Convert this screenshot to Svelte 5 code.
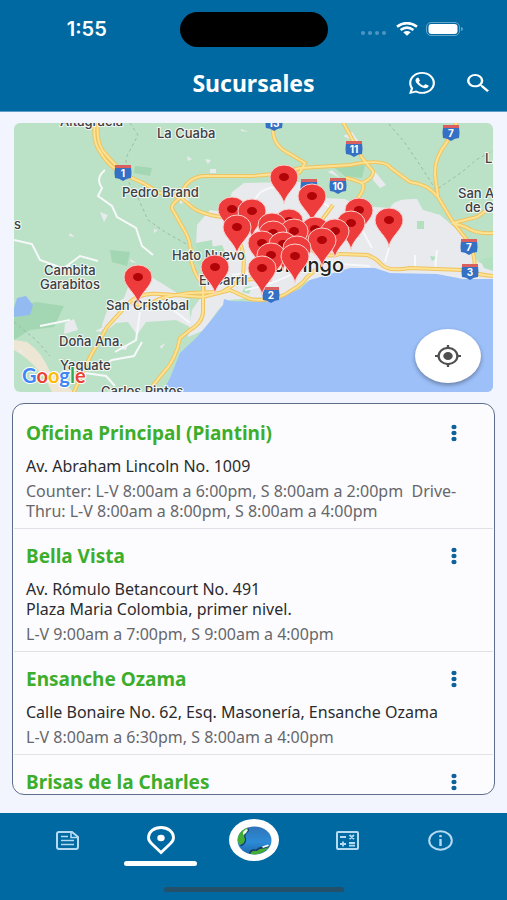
<script lang="ts">
  interface Branch {
    name: string;
    address: string[];
    hours: string;
  }

  interface Label {
    x: number;
    y: number;
    text: string;
  }

  const branches: Branch[] = [
    {
      name: "Oficina Principal (Piantini)",
      address: ["Av. Abraham Lincoln No. 1009"],
      hours: "Counter: L-V 8:00am a 6:00pm, S 8:00am a 2:00pm  Drive-Thru: L-V 8:00am a 8:00pm, S 8:00am a 4:00pm",
    },
    {
      name: "Bella Vista",
      address: ["Av. Rómulo Betancourt No. 491", "Plaza Maria Colombia, primer nivel."],
      hours: "L-V 9:00am a 7:00pm, S 9:00am a 4:00pm",
    },
    {
      name: "Ensanche Ozama",
      address: ["Calle Bonaire No. 62, Esq. Masonería, Ensanche Ozama"],
      hours: "L-V 8:00am a 6:30pm, S 8:00am a 4:00pm",
    },
    {
      name: "Brisas de la Charles",
      address: [],
      hours: "",
    },
  ];

  // map units, north to south so the lower pins overlap the upper ones
  const pins = [
    [284, 177], [312, 196], [232, 209], [359, 210], [252, 211], [389, 220],
    [289, 221], [351, 223], [272, 225], [237, 227], [315, 229], [294, 231],
    [335, 231], [273, 233], [262, 243], [283, 244], [322, 240], [297, 248],
    [271, 255], [295, 256], [215, 267], [262, 268], [138, 277],
  ];

  const labels: Label[] = [
    { x: 60, y: 126, text: "Altagracia" },
    { x: 157, y: 138, text: "La Cuaba" },
    { x: 122, y: 197, text: "Pedro Brand" },
    { x: 14, y: 229, text: "s" },
    { x: 172, y: 260, text: "Hato Nuevo" },
    { x: 199, y: 285, text: "El Carril" },
    { x: 44, y: 275, text: "Cambita" },
    { x: 40, y: 289, text: "Garabitos" },
    { x: 106, y: 310, text: "San Cristóbal" },
    { x: 59, y: 346, text: "Doña Ana." },
    { x: 60, y: 370, text: "Yaguate" },
    { x: 101, y: 396, text: "Carlos Pintos" },
    { x: 485, y: 163, text: "L" },
    { x: 458, y: 198, text: "San A" },
    { x: 465, y: 212, text: "de G" },
  ];

  const shields = [
    { x: 123, y: 173, n: "1" },
    { x: 274, y: 123, n: "13" },
    { x: 354, y: 149, n: "11" },
    { x: 451, y: 133, n: "7" },
    { x: 309, y: 187, n: "" },
    { x: 338, y: 186, n: "10" },
    { x: 469, y: 247, n: "7" },
    { x: 470, y: 272, n: "3" },
    { x: 271, y: 295, n: "2" },
  ];

  const roads = [
    "M95 122Q92 142 101 153Q108 166 123 174L143 183L160 193L180 197L192 207Q200 214 222 217",
    "M98 122Q96 141 103 151Q112 162 120 169",
    "M180 198Q185 178 203 176L237 176Q270 177 300 168L350 165Q384 158 391 168L410 182Q428 184 438 197",
    "M273 130Q273 146 290 154L305 163L300 172L290 178",
    "M343 122L350 135L362 158L373 171Q374 178 362 183Q350 178 345 178M362 183Q366 188 358 198L350 207",
    "M457 122L447 142Q434 158 435 175L438 197L453 222L467 240Q477 255 474 274",
    "M452 223Q465 226 471 230Q480 234 494 233M453 223L477 217L494 205",
    "M180 198Q168 206 174 212L183 228Q191 240 191 255Q191 270 203 285L203 310Q204 322 190 330L180 338Q176 360 163 373L146 394",
    "M73 394L90 357L107 327L127 305Q138 292 160 294L203 297L230 290L250 299Q275 303 292 290Q303 284 307 277L318 268",
    "M132 303Q148 308 155 301Q164 296 190 293L215 292",
    "M300 243Q325 260 340 254L367 255Q376 258 381 264Q388 272 410 268L463 270Q478 275 494 276",
    "M238 240Q246 252 243 274Q240 282 222 292M243 280Q260 280 282 266M333 205L318 225",
  ];

  const streets = [
    "M105 170Q95 178 102 188L98 196L112 206L117 217L136 228L142 246L153 255",
    "M14 240L32 244L40 260L62 268L70 265",
    "M60 271L80 256L98 261M40 326L70 320",
    "M140 312L136 340L115 352M98 368L112 360L134 356L142 342",
    "M85 373L106 376L115 386M172 309L190 323",
    "M255 203Q256 190 275 187L293 190M300 199Q320 196 332 210",
    "M232 275Q265 270 295 262M245 290Q275 284 298 271",
    "M360 226L372 248M389 248L385 262M325 263L370 266M415 255L415 270M437 250L435 269",
  ];

  const tabs = [
    { id: "noticias", name: "Noticias" },
    { id: "sucursales", name: "Sucursales" },
    { id: "inicio", name: "Inicio" },
    { id: "calculadora", name: "Calculadora" },
    { id: "info", name: "Información" },
  ];

  let active = $state("sucursales");
</script>

<div class="app">
  <header>
    <div class="status">
      <span class="time">1:55</span>
      <span class="island"></span>
      <div class="signals">
        <svg width="28" height="6" viewBox="0 0 28 6" fill="#4c97c2">
          <circle cx="3" cy="3" r="2" /><circle cx="10" cy="3" r="2" />
          <circle cx="17" cy="3" r="2" /><circle cx="24" cy="3" r="2" />
        </svg>
        <svg width="22" height="14" viewBox="0 0 22 14" fill="none" stroke="#fff" stroke-width="2.6">
          <path d="M1 4.6Q11 -2.4 21 4.6" />
          <path d="M4.6 8Q11 3.400 17.400 8" />
          <path d="M7.300 10.200Q11 7.600 14.700 10.200L11 13.800z" fill="#fff" stroke="none" />
        </svg>
        <svg width="37" height="14" viewBox="0 0 37 14">
          <rect x=".5" y=".5" width="33" height="13" rx="4.500" fill="none" stroke="#66a5ca" />
          <rect x="2.500" y="2" width="29" height="10" rx="3" fill="#fff" />
          <path d="M35 5v4q2-.5 2-2t-2-2" fill="#66a5ca" />
        </svg>
      </div>
    </div>
    <div class="bar">
      <h1>Sucursales</h1>
      <div class="actions">
        <button aria-label="WhatsApp">
          <svg width="26" height="22" viewBox="2 2 20 20" preserveAspectRatio="none" fill="#fff">
            <path d="M12.040 2C6.580 2 2.130 6.450 2.130 11.910C2.130 13.660 2.590 15.360 3.450 16.860L2.050 22L7.300 20.620C8.750 21.410 10.380 21.830 12.040 21.830C17.500 21.830 21.950 17.380 21.950 11.920C21.950 9.270 20.920 6.780 19.050 4.910C17.180 3.030 14.690 2 12.040 2M12.050 3.670C14.250 3.670 16.310 4.530 17.870 6.090C19.420 7.650 20.280 9.720 20.280 11.920C20.280 16.460 16.580 20.150 12.040 20.150C10.560 20.150 9.110 19.760 7.850 19L7.550 18.830L4.430 19.650L5.260 16.610L5.060 16.290C4.240 15 3.800 13.470 3.800 11.910C3.810 7.370 7.500 3.670 12.050 3.670" />
            <path d="M8.530 7.330C8.370 7.330 8.100 7.390 7.870 7.640C7.650 7.890 7 8.500 7 9.710C7 10.930 7.890 12.100 8 12.270C8.140 12.440 9.760 14.940 12.250 16C12.840 16.270 13.300 16.420 13.660 16.530C14.250 16.720 14.790 16.690 15.220 16.630C15.700 16.560 16.680 16.030 16.890 15.450C17.100 14.870 17.100 14.380 17.040 14.270C16.970 14.170 16.810 14.110 16.560 14C16.310 13.860 15.090 13.260 14.870 13.180C14.640 13.100 14.500 13.060 14.310 13.300C14.150 13.550 13.670 14.110 13.530 14.270C13.380 14.440 13.240 14.460 13 14.340C12.740 14.210 11.940 13.950 11 13.110C10.260 12.450 9.770 11.640 9.620 11.390C9.500 11.150 9.610 11 9.730 10.890C9.840 10.780 10 10.600 10.100 10.450C10.230 10.310 10.270 10.200 10.350 10.040C10.430 9.870 10.390 9.730 10.330 9.610C10.270 9.500 9.770 8.260 9.560 7.770C9.360 7.290 9.160 7.350 9 7.340Z" />
          </svg>
        </button>
        <button aria-label="Buscar">
          <svg width="22" height="18" viewBox="3 3 17.500 17.500" preserveAspectRatio="none" fill="#fff">
            <path d="M15.500 14h-.79l-.28-.27A6.471 6.471 0 0 0 16 9.500 6.500 6.500 0 1 0 9.500 16c1.610 0 3.090-.59 4.230-1.570l.27.28v.79l5 4.990L20.490 19l-4.990-5zm-6 0C7.010 14 5 11.990 5 9.500S7.010 5 9.500 5 14 7.010 14 9.500 11.990 14 9.500 14z" />
          </svg>
        </button>
      </div>
    </div>
  </header>

  <main>
    <section class="map">
      <svg class="canvas" viewBox="14 123 479 269" preserveAspectRatio="xMidYMid slice">
        <rect x="14" y="123" width="479" height="269" fill="#bbe2c6" />
        <g fill="#a3d6b2">
          <path d="M14 308L36 302L64 306L54 327L30 330L14 340z" />
          <path d="M110 250L130 252L127 266L112 262z" />
          <path d="M135 166L152 168L150 176L134 173zM335 168L365 165L362 178L345 176z" />
        </g>
        <path d="M14 340L27 342Q42 352 50 372L74 392H52Q40 365 14 350z" fill="#eee6d4" />
        <path d="M17 298L26 296L33 305L30 315L14 317V308z" fill="#94baf2" />

        <!-- built-up areas -->
        <g fill="#e8eaee">
          <path d="M244 183L300 182L322 198L345 199L358 206L390 208Q394 198 417 199L423 210L440 215L460 232L470 247L478 262L494 268V280H380L310 280L280 296L228 300L218 310L204 330L188 337L192 310L206 290L205 255L196 245L197 225L210 210L226 212L232 192z" />
          <path d="M102 325L108 308L124 298L130 282L148 275L163 284L188 300L192 328L176 320L146 322L137 335L128 322L116 323L104 333z" />
          <path d="M210 169h6v4h-6zM372 168L386 185L380 188L373 180zM332 170L340 178L328 172zM100 212L108 215L104 222zM65 323L74 319L78 330L64 334zM178 194L190 200L180 204zM343 136L352 132L362 146L352 140z" />
          <path d="M187 156l5 3-4 2zM205 159l6 1-3 4zM70 233l5 4-6-1zM154 229l4 1-4 3zM241 129l8 3-8-1zM20 349l4 5-6-3zM130 259l7 4-6-1zM95 331l10-5-4 6zM120 349l8-4-2 5zM160 346l6-3-5 6z" />
        </g>
        <g fill="#b4e0c2">
          <path d="M210 247L222 245L226 254L214 258zM245 287L252 286L249 294L242 292zM417 221h7v8h-7zM430 256l8 1-6 4zM480 260L493 256V271L484 268z" />
          <path d="M196 243L212 240L214 262L204 270L196 262z" />
        </g>

        <path d="M162 393L170 378L180 353L197 337L213 318L223 305L224 299L230 301L260 302L280 297L300 289L310 280L330 274L350 268L375 268L390 273L437 274L463 279H494V393z" fill="#9dc0f9" />

        <path d="M130 123L138 135L127 156L124 174L139 200L148 220L165 232L190 246M14 322L36 340L50 356" class="border" />
        <path d="M389 124L405 143L420 165L436 190L462 172L476 160L494 150" class="border" />

        {#each streets as d}
          <path {d} class="street" />
        {/each}
        {#each roads as d}
          <path {d} class="road-edge" />
        {/each}
        {#each roads as d}
          <path {d} class="road" />
        {/each}

        <g class="labels">
          {#each labels as label}
            <text x={label.x} y={label.y}>{label.text}</text>
          {/each}
          <text class="city" x="344" y="272">Domingo</text>
        </g>

        {#each shields as s}
          <path d="M{s.x - 8} {s.y - 6}H{s.x + 8}Q{s.x + 9} {s.y} {s.x + 8} {s.y + 5}Q{s.x + 4} {s.y + 5} {s.x} {s.y + 8}Q{s.x - 4} {s.y + 5} {s.x - 8} {s.y + 5}Q{s.x - 9} {s.y} {s.x - 8} {s.y - 6}" fill="#3470c4" />
          <path d="M{s.x - 8} {s.y - 8}H{s.x + 8}V{s.y - 5}H{s.x - 8}z" fill="#d9605f" />
          <text class="route" x={s.x} y={s.y + 4}>{s.n}</text>
        {/each}

        {#each pins as [x, y]}
          <g transform="translate({x} {y})">
            <path d="M0 27C-1.500 16 -14 10 -14 0A14 12 0 0 1 14 0C14 10 1.500 16 0 27z" fill="#ee3b3c" stroke="#fbd0cd" />
            <ellipse rx="5" ry="4" fill="#b00408" />
          </g>
        {/each}

        <text class="google" x="22" y="383"><tspan fill="#4285f4">G</tspan><tspan fill="#ea4335">o</tspan><tspan fill="#fbbc05">o</tspan><tspan fill="#4285f4">g</tspan><tspan fill="#34a853">l</tspan><tspan fill="#ea4335">e</tspan></text>
      </svg>
      <button class="locate" aria-label="Mi ubicación">
        <svg width="26" height="22" viewBox="1 1 22 22" preserveAspectRatio="none" fill="#4f4f4f">
          <path d="M12 8a4 4 0 1 0 0 8 4 4 0 0 0 0-8zm8.940 3A8.994 8.994 0 0 0 13 3.060V1h-2v2.060A8.994 8.994 0 0 0 3.060 11H1v2h2.060A8.994 8.994 0 0 0 11 20.940V23h2v-2.060A8.994 8.994 0 0 0 20.940 13H23v-2h-2.060zM12 19a7 7 0 1 1 0-14 7 7 0 0 1 0 14z" fill-rule="evenodd" />
        </svg>
      </button>
    </section>

    <ul class="branches">
      {#each branches as branch}
        <li>
          <div class="head">
            <h2>{branch.name}</h2>
            <button class="more" aria-label="Opciones">
              <svg width="6" height="18" viewBox="0 0 6 18" fill="#0c6299">
                <ellipse cx="3" cy="3" rx="2.600" ry="2.200" />
                <ellipse cx="3" cy="9" rx="2.600" ry="2.200" />
                <ellipse cx="3" cy="15" rx="2.600" ry="2.200" />
              </svg>
            </button>
          </div>
          <p class="address">
            {#each branch.address as line}
              <span>{line}</span>
            {/each}
          </p>
          <p class="hours">{branch.hours}</p>
        </li>
      {/each}
    </ul>
  </main>

  <nav>
    <div class="tabs">
      {#each tabs as tab}
        <a
          href="#{tab.id}"
          class:active={active === tab.id}
          aria-label={tab.name}
          onclick={() => (active = tab.id)}
        >
          {#if tab.id === "noticias"}
            <svg width="23" height="19" viewBox="0 0 23 19" fill="none" stroke="#b5dbf3" stroke-width="2">
              <path d="M3 1H16L22 6V16Q22 18 20 18H3Q1 18 1 16V3Q1 1 3 1z" />
              <path d="M5 5.500H12M5 9.500H18M5 13.500H18M15 2V6.500H21" stroke-width="1.600" />
            </svg>
          {:else if tab.id === "sucursales"}
            <svg width="28" height="29" viewBox="0 0 28 29">
              <path d="M14 26.500L5 18Q1.500 15 1.500 11.500C1.500 6 7 1.500 14 1.500S26.500 6 26.500 11.500Q26.500 15 23 18z" fill="none" stroke="#fff" stroke-width="2.800" />
              <ellipse cx="14" cy="12" rx="3.700" ry="3.200" fill="#fff" />
            </svg>
          {:else if tab.id === "inicio"}
            <span class="globe">
              <svg width="35" height="29" viewBox="0 0 35 29">
                <defs>
                  <linearGradient id="sea" x1="0" y1="0" x2="0" y2="1">
                    <stop offset="0" stop-color="#2f74b8" />
                    <stop offset=".55" stop-color="#2d8bd6" />
                    <stop offset="1" stop-color="#1c69ab" />
                  </linearGradient>
                </defs>
                <ellipse cx="17.500" cy="14.500" rx="17" ry="14" fill="url(#sea)" />
                <path d="M11 1.500Q3 4 1 11Q0 16 3 19Q9 17 8 12Q6 9 10 6Z" fill="#45ad34" />
                <path d="M11 2Q11 5 9 7Q6 9 8 13Q8 18 3 19L4 20.500Q10 18 9 12Q7 9 11 6Q13 4 11 2z" fill="#173c6c" />
                <path d="M9 3L6 6L6 9L9 7L11 4z" fill="#e4f5ea" />
                <path d="M12 27.500Q14 24 19 24.500Q22 21 27 22L32 21Q26 28 18 28.500z" fill="#45ad34" />
                <path d="M12 27.500Q13 22.500 19 23.500Q22 20 27 21L32 20L32 21L27 22.500Q22 22 20 25Q15 24 13 28z" fill="#173c6c" />
                <path d="M25 20.500L31 18.500L32 20L26 22z" fill="#f3fbff" />
              </svg>
            </span>
          {:else if tab.id === "calculadora"}
            <svg width="23" height="19" viewBox="0 0 23 19" fill="none" stroke="#b5dbf3" stroke-width="2">
              <rect x="1" y="1" width="21" height="17" rx="1" />
              <path d="M4 6H10M13.500 4L18 8M18 4L13.500 8M4 13H10M7 10.500V15.500M13 12H19M13 14.700H19" stroke-width="1.800" />
            </svg>
          {:else}
            <svg width="25" height="21" viewBox="0 0 25 21" fill="none" stroke="#b5dbf3" stroke-width="2">
              <ellipse cx="12.500" cy="10.500" rx="11.300" ry="9.300" />
              <path d="M12.500 9V16M12.500 5V7.200" stroke-width="2.400" />
            </svg>
          {/if}
        </a>
      {/each}
    </div>
    <span class="home"></span>
  </nav>
</div>

<style>
  :global(body) {
    margin: 0;
  }

  .app {
    display: flex;
    flex-direction: column;
    height: 100vh;
    font-family: "Noto Sans", "Open Sans", sans-serif;
    background: #f2f5fd;
  }

  header {
    background: #0169a2;
    color: #fff;
    padding-bottom: 3px;
    border-bottom: 1px solid #5f9ec6;
  }

  .status {
    display: grid;
    grid-template-columns: 1fr 148px 1fr;
    align-items: center;
    justify-items: center;
    height: 58px;
  }

  .time {
    padding-right: 6px;
    font: 600 20px/20px Inter, sans-serif;
  }

  .island {
    width: 148px;
    height: 35px;
    border-radius: 18px;
    background: #000;
  }

  .signals {
    display: flex;
    align-items: center;
    gap: 8px;
    padding-right: 12px;
  }

  .signals svg:first-child {
    align-self: flex-end;
  }

  .bar {
    display: grid;
    grid-template-columns: 1fr auto 1fr;
    align-items: center;
    height: 50px;
    padding: 0 18px;
  }

  h1 {
    grid-column: 2;
    margin: 0;
    font-size: 23px;
    line-height: 28px;
    font-weight: 700;
  }

  .actions {
    display: flex;
    justify-content: flex-end;
    align-items: center;
    gap: 32px;
  }

  button {
    display: flex;
    align-items: center;
    justify-content: center;
    padding: 0;
    border: 0;
    background: none;
    cursor: pointer;
  }

  main {
    display: flex;
    flex: 1;
    flex-direction: column;
    gap: 11px;
    min-height: 0;
    padding: 11px 12px 18px;
  }

  .map {
    position: relative;
    flex: none;
    height: 269px;
    margin: 0 2px;
    border-radius: 6px;
    overflow: hidden;
  }

  .canvas {
    display: block;
    width: 100%;
    height: 100%;
  }

  .border {
    fill: none;
    stroke: #9db8a8;
    stroke-dasharray: 3 3;
  }

  .street {
    fill: none;
    stroke: #f6f8fa;
    stroke-width: 2;
  }

  .road-edge {
    fill: none;
    stroke: #efc35f;
    stroke-width: 4;
  }

  .road {
    fill: none;
    stroke: #fde293;
    stroke-width: 2;
  }

  .labels text {
    font: 500 13px Inter, sans-serif;
    fill: #3c4043;
    stroke: #f3f8f4;
    stroke-width: 2px;
    paint-order: stroke;
  }

  .labels .city {
    font-size: 20px;
    text-anchor: end;
    fill: #222;
  }

  .route {
    font: 700 10px Inter, sans-serif;
    fill: #fff;
    text-anchor: middle;
  }

  .google {
    font: 700 20px Lato, sans-serif;
    stroke: #fff;
    stroke-width: 2px;
    paint-order: stroke;
  }

  .locate {
    position: absolute;
    right: 12px;
    bottom: 9px;
    width: 66px;
    height: 54px;
    border-radius: 50%;
    background: #fff;
    box-shadow: 0 2px 4px rgba(0, 0, 0, 0.35);
  }

  .branches {
    flex: 1;
    min-height: 0;
    margin: 0;
    padding: 2px 1px 0;
    list-style: none;
    overflow: hidden;
    background: #fcfcfe;
    border: 1px solid #5d6e8c;
    border-radius: 12px;
  }

  li {
    padding: 15px 30px 7px 12px;
    border-bottom: 1px solid #dfe1e6;
  }

  .head {
    display: flex;
    align-items: center;
    justify-content: space-between;
    margin-bottom: 11px;
  }

  h2 {
    margin: 0;
    font-size: 19px;
    line-height: 24px;
    font-weight: 700;
    color: #3dae2b;
  }

  .more {
    width: 18px;
    height: 24px;
  }

  p {
    margin: 0;
    font-size: 16px;
    line-height: 20px;
  }

  .address {
    margin-bottom: 5px;
    color: #2b2b2e;
  }

  .address span {
    display: block;
  }

  .hours {
    color: #66676b;
    white-space: pre-wrap;
  }

  nav {
    display: flex;
    flex-direction: column;
    align-items: center;
    justify-content: space-between;
    height: 79px;
    padding-bottom: 8px;
    background: #0169a2;
  }

  .tabs {
    display: flex;
    align-self: stretch;
    padding: 0 20px 0 21px;
  }

  a {
    display: flex;
    flex: 1;
    align-items: center;
    justify-content: center;
    height: 54px;
  }

  .active {
    position: relative;
  }

  .active::after {
    content: "";
    position: absolute;
    bottom: 1px;
    width: 73px;
    height: 5px;
    border-radius: 3px;
    background: #fff;
  }

  .globe {
    display: flex;
    align-items: center;
    justify-content: center;
    width: 50px;
    height: 42px;
    border-radius: 50%;
    background: #fff;
  }

  .home {
    width: 180px;
    height: 5px;
    border-radius: 3px;
    background: #24506a;
  }
</style>
